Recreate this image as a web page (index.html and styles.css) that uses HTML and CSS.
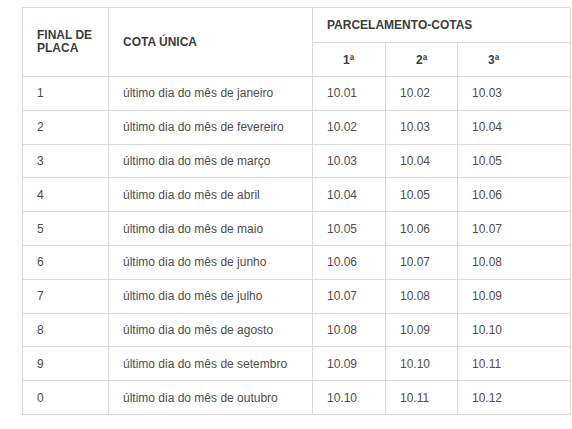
FILE: index.html
```html
<!DOCTYPE html>
<html lang="pt">
<head>
<meta charset="utf-8">
<link rel="stylesheet" href="styles.css">
</head>
<body>
<table class="cotas">
  <colgroup>
    <col class="c-final">
    <col class="c-unica">
    <col class="c-p1">
    <col class="c-p2">
    <col class="c-p3">
  </colgroup>
  <thead>
    <tr class="h1">
      <th rowspan="2" class="th-final">FINAL DE<br>PLACA</th>
      <th rowspan="2">COTA ÚNICA</th>
      <th colspan="3">PARCELAMENTO-COTAS</th>
    </tr>
    <tr class="h2">
      <th class="ord">1ª</th>
      <th class="ord">2ª</th>
      <th class="ord">3ª</th>
    </tr>
  </thead>
  <tbody>
    <tr><td>1</td><td>último dia do mês de janeiro</td><td>10.01</td><td>10.02</td><td>10.03</td></tr>
    <tr><td>2</td><td>último dia do mês de fevereiro</td><td>10.02</td><td>10.03</td><td>10.04</td></tr>
    <tr><td>3</td><td>último dia do mês de março</td><td>10.03</td><td>10.04</td><td>10.05</td></tr>
    <tr><td>4</td><td>último dia do mês de abril</td><td>10.04</td><td>10.05</td><td>10.06</td></tr>
    <tr><td>5</td><td>último dia do mês de maio</td><td>10.05</td><td>10.06</td><td>10.07</td></tr>
    <tr><td>6</td><td>último dia do mês de junho</td><td>10.06</td><td>10.07</td><td>10.08</td></tr>
    <tr><td>7</td><td>último dia do mês de julho</td><td>10.07</td><td>10.08</td><td>10.09</td></tr>
    <tr><td>8</td><td>último dia do mês de agosto</td><td>10.08</td><td>10.09</td><td>10.10</td></tr>
    <tr><td>9</td><td>último dia do mês de setembro</td><td>10.09</td><td>10.10</td><td>10.11</td></tr>
    <tr><td>0</td><td>último dia do mês de outubro</td><td>10.10</td><td>10.11</td><td>10.12</td></tr>
  </tbody>
</table>
</body>
</html>
```
FILE: styles.css
```css
html, body {
  margin: 0;
  padding: 0;
  background: #ffffff;
}
body {
  padding: 7px 0 0 22px;
  font-family: "Liberation Sans", Arial, sans-serif;
  font-size: 12px;
  color: #4d4d4d;
}
.cotas {
  border-collapse: collapse;
  table-layout: fixed;
  width: 549px;
}
.c-final { width: 86px; }
.c-unica { width: 204px; }
.c-p1 { width: 73px; }
.c-p2 { width: 72px; }
.c-p3 { width: 113px; }
.cotas th,
.cotas td {
  border: 1px solid #dadada;
  padding: 0 0 0 14px;
  text-align: left;
  vertical-align: middle;
  white-space: nowrap;
}
.cotas th {
  font-weight: bold;
  color: #3c3c3c;
}
.h1 th { height: 34px; }
.h2 th { height: 33px; }
.th-final {
  line-height: 13px;
  padding-bottom: 4px;
}
.cotas th.ord {
  padding-left: 30px;
}
.cotas td {
  height: 32.8px;
}
```
